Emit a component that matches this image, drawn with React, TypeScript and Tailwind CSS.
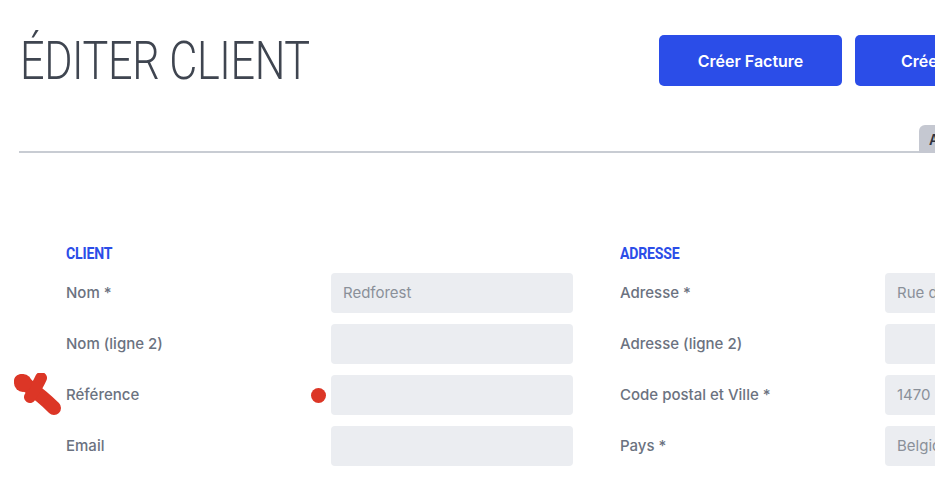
import React from 'react';

const clientFields = [
  { label: 'Nom *', value: 'Redforest' },
  { label: 'Nom (ligne 2)', value: '' },
  { label: 'Référence', value: '', marked: true },
  { label: 'Email', value: '' },
];

const addressFields = [
  { label: 'Adresse *', value: 'Rue de la Station 12' },
  { label: 'Adresse (ligne 2)', value: '' },
  { label: 'Code postal et Ville *', value: '1470' },
  { label: 'Pays *', value: 'Belgique' },
];

type Field = { label: string; value: string; marked?: boolean };

function Section({ title, fields }: { title: string; fields: Field[] }) {
  return (
    <div className="w-[554px] shrink-0">
      <h2 className="h-[13px] mb-[13px] flex items-center text-[16px] font-bold uppercase text-[#2b4de8] tracking-[-0.2px] font-['Roboto',sans-serif] scale-x-[0.88] origin-left leading-none">
        {title}
      </h2>
      <div className="flex flex-col gap-[11px]">
        {fields.map((f) => (
          <div key={f.label} className="relative flex items-center h-[40px]">
            {f.marked && (
              <>
                <svg className="absolute -left-[54px] top-[-2px]" width="50" height="42" viewBox="0 0 50 42">
                  <path d="M9 8 C15 12 23 18 30 24 C36 29 40 33 42 35" stroke="#dc3626" strokeWidth="14" strokeLinecap="round" fill="none" />
                  <path d="M29 5 C26 12 22 18 18 24" stroke="#dc3626" strokeWidth="12" strokeLinecap="round" fill="none" />
                  <circle cx="11" cy="10" r="9" fill="#dc3626" />
                </svg>
                <span className="absolute left-[245px] w-[15px] h-[15px] rounded-full bg-[#dc3626]" />
              </>
            )}
            <div className="w-[265px] shrink-0 text-[15px] font-medium text-[#6b7280]">{f.label}</div>
            <div className="w-[242px] h-full rounded-[4px] bg-[#ebedf1] flex items-center px-[12px] text-[15px] text-[#8a9099] whitespace-nowrap overflow-hidden">
              {f.value}
            </div>
          </div>
        ))}
      </div>
    </div>
  );
}

export default function App() {
  return (
    <div className="w-[950px] h-[504px] bg-white overflow-hidden font-['Inter',sans-serif]">
      <div className="w-[935px] h-full overflow-hidden relative">
        {/* header */}
        <div className="flex items-center justify-between pt-[35px] pl-[20px] h-[86px]">
          <h1 className="text-[54px] font-light text-[#3f4550] leading-none font-['Roboto',sans-serif] scale-x-[0.8] origin-left whitespace-nowrap tracking-[-0.5px]">
            ÉDITER CLIENT
          </h1>
          <div className="flex gap-[13px] shrink-0 mr-[-90px]">
            <button className="w-[183px] h-[51px] rounded-[5px] bg-[#2b4de8] text-white text-[16px] font-semibold">
              Créer Facture
            </button>
            <button className="w-[170px] h-[51px] rounded-[5px] bg-[#2b4de8] text-white text-[16px] font-semibold text-left pl-[46px]">
              Créer Devis
            </button>
          </div>
        </div>

        {/* tabs */}
        <div className="mt-[40px] ml-[19px] flex items-end h-[27px] border-b-2 border-[#c8ccd3]">
          <div className="ml-auto mr-[-44px] mb-[-2px] w-[60px] h-[28px] bg-[#c5c8d1] rounded-tl-[6px] pl-[10px] pt-[4px] text-[14px] font-semibold text-[#2f3440] overflow-hidden whitespace-nowrap">
            Adresses
          </div>
        </div>

        {/* form */}
        <div className="flex gap-0 pl-[66px] pt-[94px]">
          <Section title="Client" fields={clientFields} />
          <Section title="Adresse" fields={addressFields} />
        </div>
      </div>
    </div>
  );
}
